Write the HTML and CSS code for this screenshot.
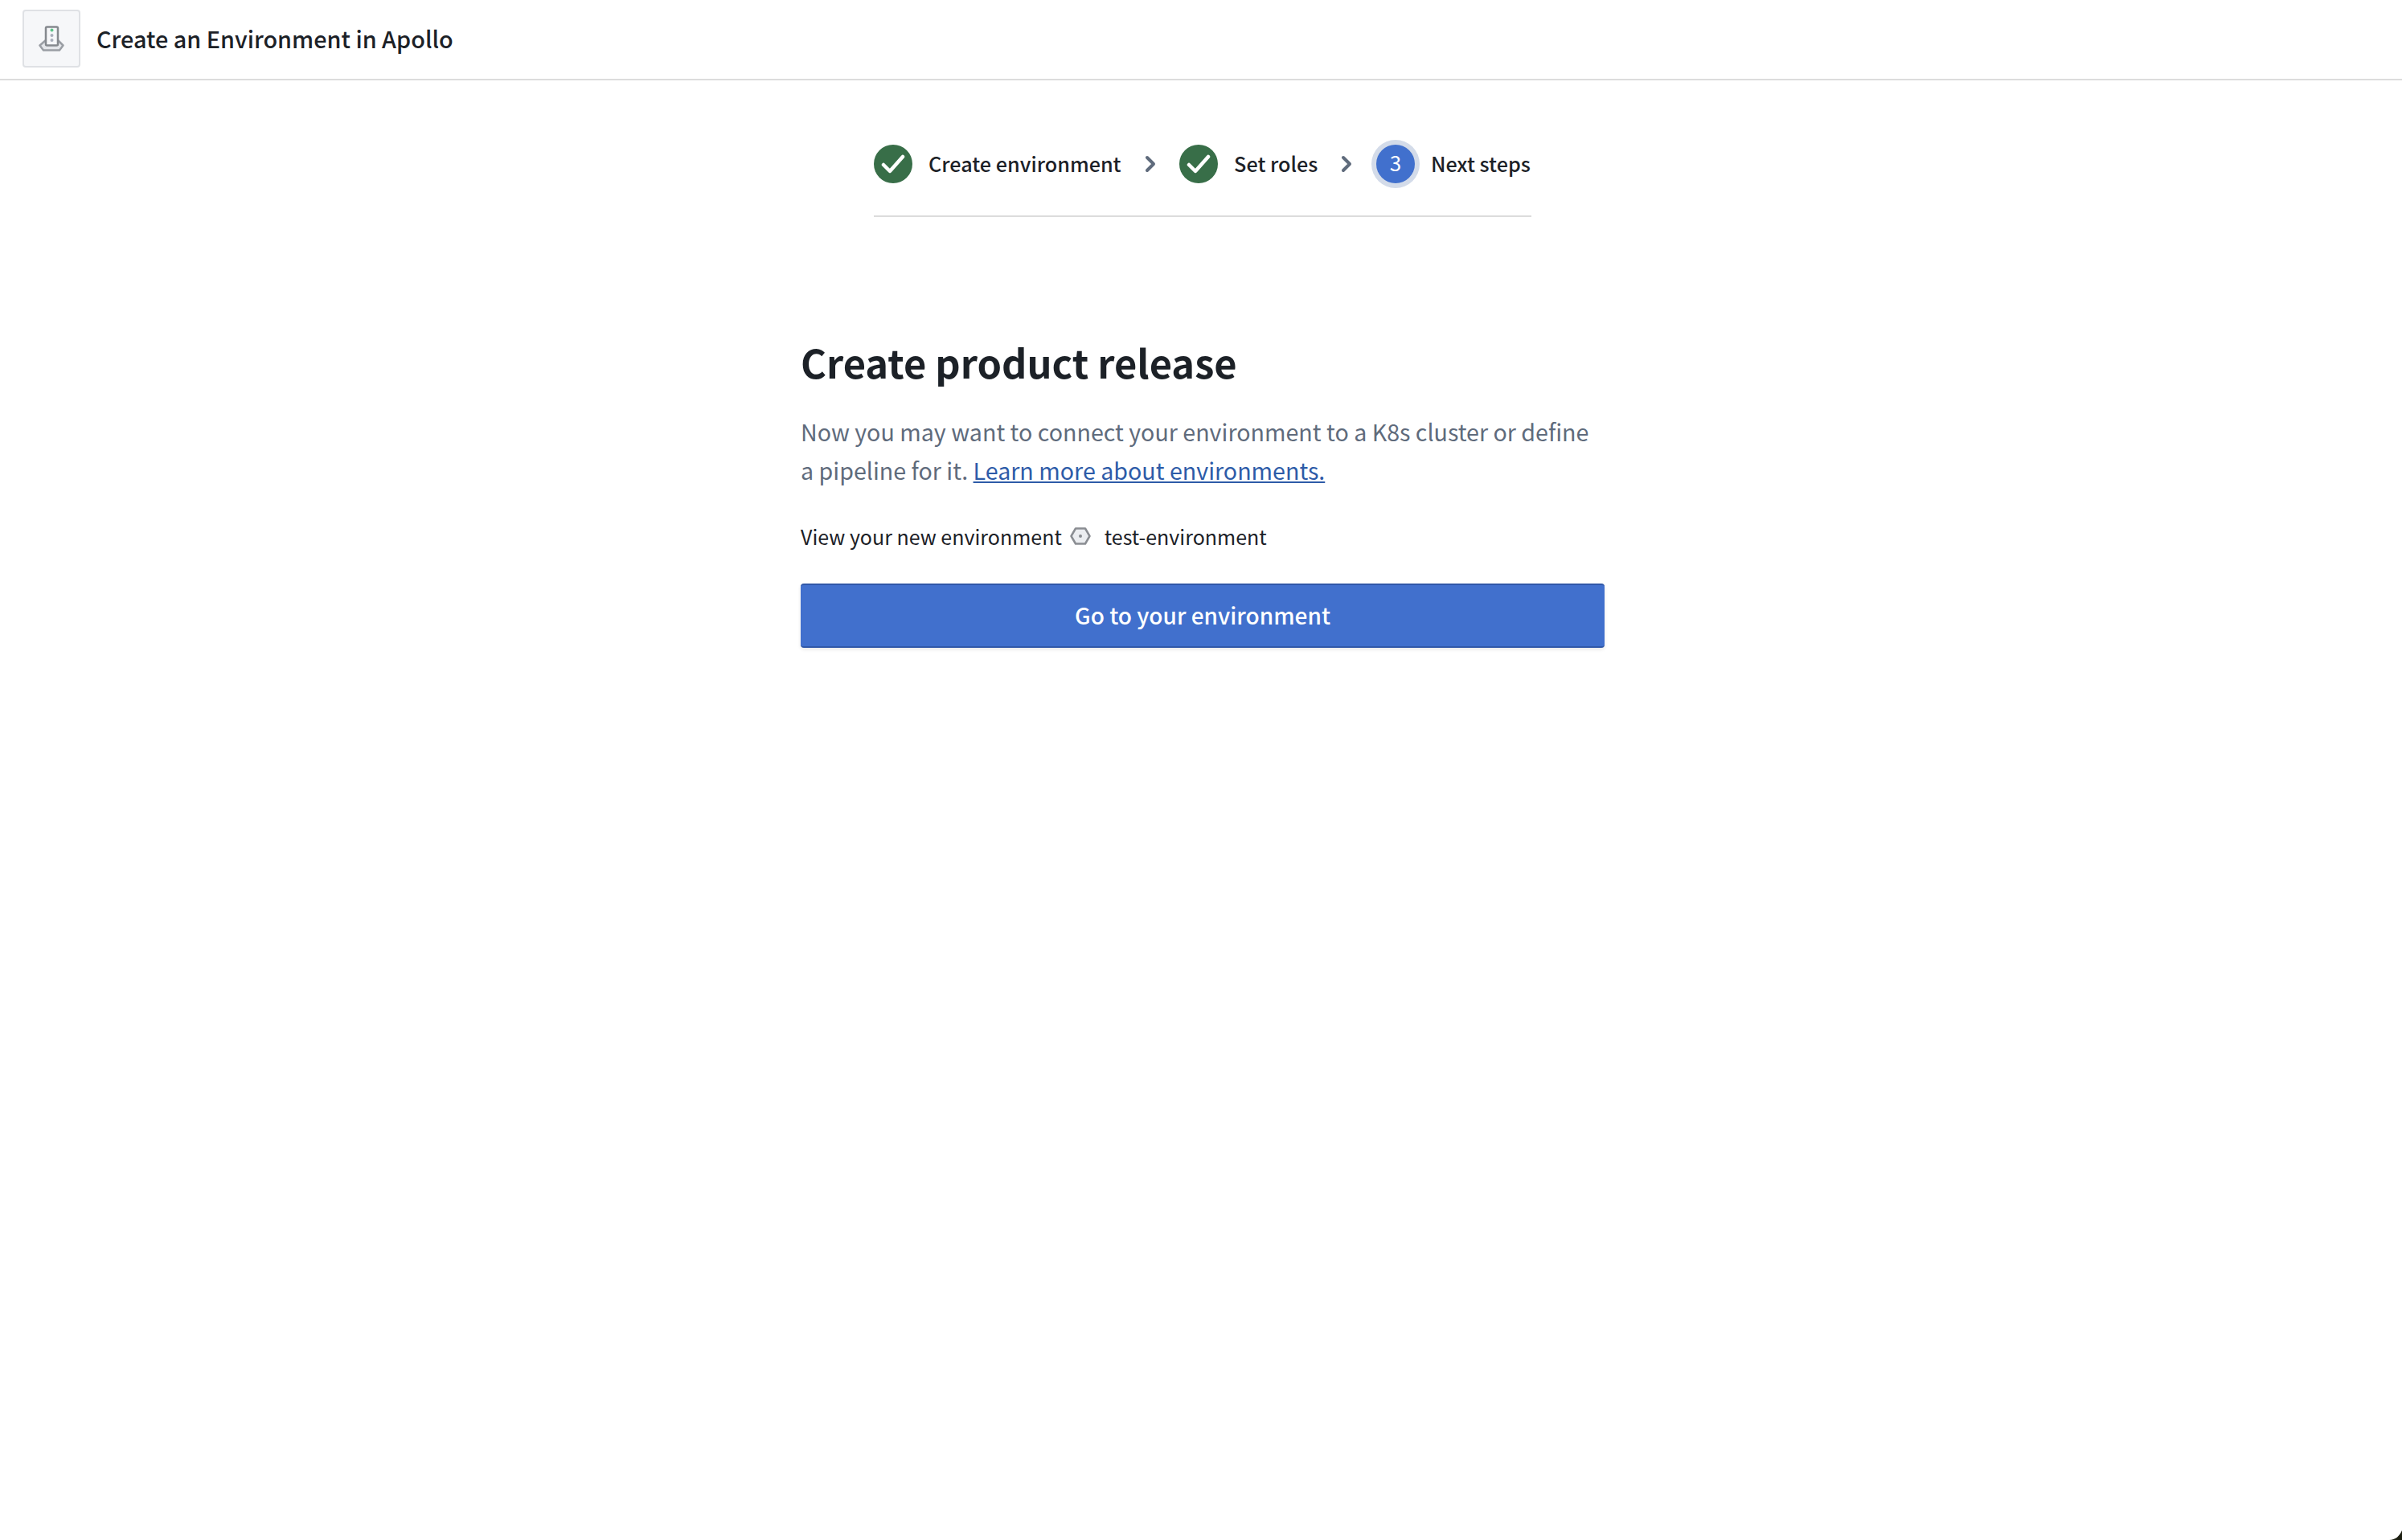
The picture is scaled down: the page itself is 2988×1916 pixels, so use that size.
FILE: index.html
```html
<!DOCTYPE html>
<html lang="en">
<head>
<meta charset="utf-8">
<title>Create an Environment in Apollo</title>
<link rel="stylesheet" href="styles.css">
</head>
<body>
<header class="topbar">
  <div class="app-icon">
    <svg width="32" height="32" viewBox="0 0 32 32">
      <path d="M9 18 1.500 24.500 6 30.500h20l4.500-6L24 18" fill="#e4e6ea" stroke="#9a9ea4" stroke-width="2.500" stroke-linejoin="round"/>
      <rect x="9" y="1.500" width="15" height="23" rx="1.500" fill="#f6f7f9" stroke="#85898e" stroke-width="2.500"/>
      <circle cx="16.500" cy="5.500" r="2" fill="#5fc48a"/>
      <circle cx="16.500" cy="12" r="2" fill="#a9afbb"/>
      <circle cx="16.500" cy="18" r="2" fill="#a9afbb"/>
    </svg>
  </div>
  <h1 class="topbar-title">Create an Environment in Apollo</h1>
</header>
<main class="page">
  <div class="column">
    <nav class="stepper">
      <div class="step">
        <span class="step-badge done">
          <svg width="30" height="26" viewBox="0 0 30 26"><path d="M3 14l8 8L27 4" fill="none" stroke="#fff" stroke-width="4.500" stroke-linecap="round" stroke-linejoin="round"/></svg>
        </span>
        <span class="step-label">Create environment</span>
      </div>
      <svg class="chevron" width="14" height="22" viewBox="0 0 14 22"><path d="M3 3l8 8-8 8" fill="none" stroke="#5f6b7c" stroke-width="4" stroke-linecap="round" stroke-linejoin="round"/></svg>
      <div class="step">
        <span class="step-badge done">
          <svg width="30" height="26" viewBox="0 0 30 26"><path d="M3 14l8 8L27 4" fill="none" stroke="#fff" stroke-width="4.500" stroke-linecap="round" stroke-linejoin="round"/></svg>
        </span>
        <span class="step-label">Set roles</span>
      </div>
      <svg class="chevron" width="14" height="22" viewBox="0 0 14 22"><path d="M3 3l8 8-8 8" fill="none" stroke="#5f6b7c" stroke-width="4" stroke-linecap="round" stroke-linejoin="round"/></svg>
      <div class="step">
        <span class="step-badge current">3</span>
        <span class="step-label">Next steps</span>
      </div>
    </nav>
    <section class="content">
      <h2 class="heading">Create product release</h2>
      <p class="lead">Now you may want to connect your environment to a K8s cluster or define a pipeline for it. <a class="lead-link" href="#">Learn more about environments.</a></p>
      <div class="env-row">
        <span>View your new environment</span>
        <svg class="env-icon" width="26" height="22" viewBox="0 0 26 22"><path d="M7 1.500h12L24.500 11 19 20.500H7L1.500 11z" fill="#eceef1" stroke="#8a8d92" stroke-width="2.500" stroke-linejoin="round"/><circle cx="13" cy="11" r="2" fill="#8a8d92"/></svg>
        <span>test-environment</span>
      </div>
      <button class="primary" type="button">Go to your environment</button>
    </section>
  </div>
</main>
<svg class="corner" width="16" height="12" viewBox="0 0 16 12"><path d="M16 0v12H0C8 12 13 7 16 0z" fill="#1d1f12"/></svg>
</body>
</html>
```
FILE: styles.css
```css
* { box-sizing: border-box; }
html, body { margin: 0; height: 100%; }
body {
  background: #fff;
  color: #1c2127;
  font-family: "Noto Sans CJK SC", "Noto Sans", sans-serif;
  overflow: hidden;
}
.topbar {
  display: flex;
  align-items: center;
  gap: 20px;
  height: 100px;
  padding: 0 0 2px 28px;
  border-bottom: 2px solid #dcdcdc;
}
.app-icon {
  width: 72px;
  height: 72px;
  display: flex;
  align-items: center;
  justify-content: center;
  background: #f6f7f9;
  border: 2px solid #dfe1e5;
  border-radius: 4px;
}
.topbar-title { margin: 0; font-size: 28.800px; font-weight: 500; line-height: 40px; }
.page { display: flex; justify-content: center; padding-left: 4px; }
.column { width: 1000px; }
.stepper {
  display: flex;
  align-items: center;
  width: 818px;
  height: 170px;
  margin: 0 auto;
  padding-top: 40px;
  border-bottom: 2px solid #dcdcdc;
}
.step { display: flex; align-items: center; gap: 20px; }
.step-badge {
  width: 48px;
  height: 48px;
  flex: none;
  display: flex;
  align-items: center;
  justify-content: center;
  border-radius: 50%;
  color: #fff;
  font-size: 26px;
  line-height: 44px;
  padding-bottom: 4px;
}
.done { background: #386e48; padding-bottom: 0; }
.current { background: #4170cd; box-shadow: 0 0 0 6px #d3dbe9; }
.step-label { font-size: 25.200px; font-weight: 500; line-height: 40px; white-space: nowrap; padding-bottom: 2px; }
.chevron { flex: none; margin: 0 29.500px 0 29px; }
.content { padding-top: 148px; }
.heading { margin: 0; font-size: 48.800px; font-weight: 600; line-height: 64px; }
.lead { margin: 31px 0 0; font-size: 28.640px; line-height: 48px; color: #5f6b7c; }
.lead-link { color: #2d5ba8; text-decoration: underline; }
.env-row {
  display: flex;
  align-items: center;
  gap: 10px;
  margin-top: 38px;
  font-size: 25px;
  line-height: 40px;
}
.env-icon { margin-right: 7px; }
.primary {
  display: block;
  width: 100%;
  height: 80px;
  margin-top: 39px;
  padding: 0 0 3px;
  background: #4170cd;
  border: 0;
  border-top: 2px solid #3058a8;
  border-bottom: 2px solid #3058a8;
  border-radius: 4px;
  box-shadow: 0 2px 4px rgba(17, 20, 24, .1);
  color: #fff;
  font-family: inherit;
  font-size: 28px;
  font-weight: 500;
}
.corner { position: fixed; right: 0; bottom: 0; }
```
